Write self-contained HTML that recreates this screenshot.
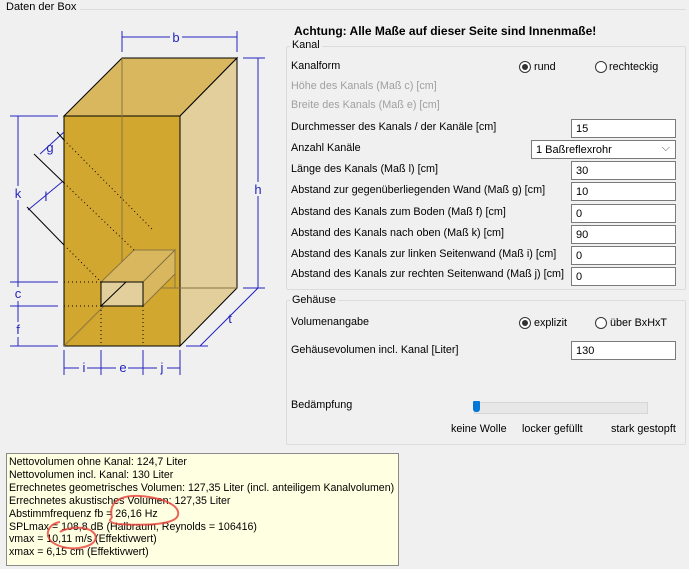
<!DOCTYPE html>
<html><head><meta charset="utf-8"><style>
body{margin:0;width:689px;height:569px;background:#f0f0f0;font-family:"Liberation Sans",sans-serif;font-size:10.8px;color:#000;position:relative;overflow:hidden}
.a{position:absolute;white-space:nowrap}
.g{color:#a0a0a0}
.in{position:absolute;background:#fff;border:1px solid #7a7a7a;box-sizing:border-box;height:19px;padding:3px 0 0 4px;font-size:11px}
.fs{position:absolute;border:1px solid #dcdcdc;border-radius:2px}
.rad{position:absolute;width:12px;height:12px;border:1px solid #333;border-radius:50%;box-sizing:border-box;background:#fff}
.rad.on::after{content:"";position:absolute;left:2px;top:2px;width:6px;height:6px;border-radius:50%;background:#333}
</style></head><body>
<div class="a" style="left:6px;top:1px;font-size:11px">Daten der Box</div>
<div style="position:absolute;left:80px;top:9px;width:606px;border-top:1px solid #dcdcdc"></div>

<svg class="a" style="left:0;top:0" width="290" height="380">
<polygon points="64,116 122,58 237,58 180,116" fill="#d8b75e" stroke="#000"/>
<polygon points="180,116 237,58 237,288 180,346" fill="#e2cf9c" stroke="#000"/>
<rect x="64" y="116" width="116" height="230" fill="#d2a730" stroke="#000"/>
<polyline points="122,58 122,288 237,288" fill="none" stroke="#8a7440"/>
<line x1="64" y1="346" x2="122" y2="288" stroke="#8a7440"/>
<polygon points="101,282 134,250 175,250 143,282" fill="#d8b75e" stroke="#8a7440"/>
<polyline points="175,250 175,288" stroke="#8a7440" fill="none"/>
<polygon points="143,306 175,274 175,250 143,282" fill="#d8b75e" stroke="#8a7440"/>
<rect x="101" y="282" width="42" height="24" fill="#e2cf9c" stroke="#000"/>
<line x1="101" y1="306" x2="126" y2="282" stroke="#000"/>
<g stroke="#000" stroke-dasharray="1,3">
<line x1="64" y1="140" x2="152" y2="229"/><line x1="64" y1="183" x2="134" y2="250"/><line x1="67" y1="248" x2="101" y2="282"/>
<line x1="64" y1="282" x2="101" y2="282"/><line x1="64" y1="306" x2="101" y2="306"/>
<line x1="101" y1="306" x2="101" y2="346"/><line x1="143" y1="306" x2="143" y2="346"/>
</g>
<g stroke="#2424c0" fill="none">
<line x1="122" y1="37" x2="237" y2="37"/><line x1="122" y1="31" x2="122" y2="52"/><line x1="237" y1="31" x2="237" y2="52"/>
<line x1="258" y1="58" x2="258" y2="288"/><line x1="243" y1="58" x2="265" y2="58"/><line x1="243" y1="288" x2="265" y2="288"/>
<line x1="18" y1="116" x2="18" y2="346"/><line x1="10" y1="116" x2="58" y2="116"/><line x1="10" y1="282" x2="58" y2="282"/><line x1="10" y1="306" x2="58" y2="306"/><line x1="10" y1="346" x2="58" y2="346"/>
<line x1="64" y1="368" x2="180" y2="368"/><line x1="64" y1="350" x2="64" y2="375"/><line x1="101" y1="350" x2="101" y2="375"/><line x1="143" y1="350" x2="143" y2="375"/><line x1="180" y1="350" x2="180" y2="375"/>
<line x1="186" y1="346" x2="208" y2="346"/><line x1="200" y1="346" x2="258" y2="288"/>
<line x1="40" y1="154" x2="64" y2="132"/><line x1="28" y1="210" x2="62" y2="182"/>
</g>
<g stroke="#000" fill="none"><line x1="34" y1="154" x2="64" y2="183"/><line x1="27" y1="207" x2="64" y2="245"/><line x1="57" y1="132" x2="64" y2="140"/></g>
<g fill="#2424c0" font-family="Liberation Sans" font-size="13" text-anchor="middle">
<rect x="170" y="30" width="12" height="14" fill="#f0f0f0"/><text x="176" y="42">b</text>
<rect x="252" y="182" width="12" height="14" fill="#f0f0f0"/><text x="258" y="194">h</text>
<rect x="12" y="186" width="12" height="14" fill="#f0f0f0"/><text x="18" y="198">k</text>
<rect x="13" y="287" width="10" height="14" fill="#f0f0f0"/><text x="18" y="298">c</text>
<rect x="13" y="322" width="10" height="15" fill="#f0f0f0"/><text x="18" y="334">f</text>
<text x="50" y="152">g</text><text x="46" y="201">l</text>
<rect x="79" y="361" width="8" height="14" fill="#f0f0f0"/><text x="84" y="372">i</text>
<rect x="116" y="361" width="12" height="14" fill="#f0f0f0"/><text x="123" y="372">e</text>
<rect x="157" y="361" width="10" height="14" fill="#f0f0f0"/><text x="162" y="372">j</text>
<text x="230" y="323">t</text></g>
</svg>

<div class="a" style="left:294px;top:24px;font-weight:bold;font-size:12px">Achtung: Alle Maße auf dieser Seite sind Innenmaße!</div>
<div class="fs" style="left:286px;top:46px;width:398px;height:242px"></div>
<div class="a" style="left:290px;top:39px;background:#f0f0f0;padding:0 2px">Kanal</div>
<div class="a" style="left:291px;top:60px">Kanalform</div>
<div class="rad on" style="left:519px;top:61px"></div><div class="a" style="left:534px;top:61px">rund</div>
<div class="rad" style="left:595px;top:61px"></div><div class="a" style="left:609px;top:61px">rechteckig</div>
<div class="a g" style="left:291px;top:80px">Höhe des Kanals (Maß c) [cm]</div>
<div class="a g" style="left:291px;top:99px">Breite des Kanals (Maß e) [cm]</div>
<div class="a" style="left:291px;top:121px">Durchmesser des Kanals / der Kanäle [cm]</div>
<div class="in" style="left:571px;top:119px;width:105px">15</div>
<div class="a" style="left:291px;top:142px">Anzahl Kanäle</div>
<div class="in" style="left:531px;top:140px;width:145px">1 Baßreflexrohr<span style="position:absolute;right:5px;top:1px;color:#555">⌵</span></div>
<div class="a" style="left:291px;top:163px">Länge des Kanals (Maß l) [cm]</div>
<div class="in" style="left:571px;top:161px;width:105px">30</div>
<div class="a" style="left:291px;top:184px">Abstand zur gegenüberliegenden Wand (Maß g) [cm]</div>
<div class="in" style="left:571px;top:182px;width:105px">10</div>
<div class="a" style="left:291px;top:206px">Abstand des Kanals zum Boden (Maß f) [cm]</div>
<div class="in" style="left:571px;top:204px;width:105px">0</div>
<div class="a" style="left:291px;top:227px">Abstand des Kanals nach oben (Maß k) [cm]</div>
<div class="in" style="left:571px;top:225px;width:105px">90</div>
<div class="a" style="left:291px;top:248px">Abstand des Kanals zur linken Seitenwand (Maß i) [cm]</div>
<div class="in" style="left:571px;top:246px;width:105px">0</div>
<div class="a" style="left:291px;top:268px">Abstand des Kanals zur rechten Seitenwand (Maß j) [cm]</div>
<div class="in" style="left:571px;top:267px;width:105px">0</div>

<div class="fs" style="left:286px;top:300px;width:398px;height:143px"></div>
<div class="a" style="left:290px;top:294px;background:#f0f0f0;padding:0 2px">Gehäuse</div>
<div class="a" style="left:291px;top:316px">Volumenangabe</div>
<div class="rad on" style="left:519px;top:317px"></div><div class="a" style="left:534px;top:317px">explizit</div>
<div class="rad" style="left:595px;top:317px"></div><div class="a" style="left:610px;top:317px">über BxHxT</div>
<div class="a" style="left:291px;top:344px">Gehäusevolumen incl. Kanal [Liter]</div>
<div class="in" style="left:571px;top:341px;width:105px">130</div>
<div class="a" style="left:291px;top:399px">Bedämpfung</div>
<div style="position:absolute;left:474px;top:402px;width:172px;height:10px;background:#e7e7e7;border:1px solid #d6d6d6"></div>
<div style="position:absolute;left:473px;top:401px;width:7px;height:11px;background:#0078d7;border-radius:1px 1px 3px 3px"></div>
<div class="a" style="left:451px;top:423px">keine Wolle</div>
<div class="a" style="left:522px;top:423px">locker gefüllt</div>
<div class="a" style="left:611px;top:423px">stark gestopft</div>

<div style="position:absolute;left:6px;top:453px;width:393px;height:113px;background:#ffffe1;border:1px solid #8a8a8a;box-sizing:border-box"></div>
<div class="a" style="left:9px;top:456px;line-height:12.9px;font-size:10.6px">Nettovolumen ohne Kanal: 124,7 Liter<br>Nettovolumen incl. Kanal: 130 Liter<br>Errechnetes geometrisches Volumen: 127,35 Liter (incl. anteiligem Kanalvolumen)<br>Errechnetes akustisches Volumen: 127,35 Liter<br>Abstimmfrequenz fb = 26,16 Hz<br>SPLmax = 108,8 dB (Halbraum, Reynolds = 106416)<br>vmax = 10,11 m/s (Effektivwert)<br>xmax = 6,15 cm (Effektivwert)</div>
<svg class="a" style="left:0;top:440px" width="200" height="129"><g fill="none" stroke="#e8403a" stroke-width="2" opacity="0.8">
<path d="M112,78 C108,62 120,55 140,56 C165,58 180,66 178,75 C176,84 150,86 118,84 C110,83 108,80 112,78"/>
<path d="M60,82 C48,84 44,95 52,102 C60,108 74,110 84,107 C96,104 100,96 90,90 C80,86 66,88 60,92"/>
</g></svg>
</body></html>
